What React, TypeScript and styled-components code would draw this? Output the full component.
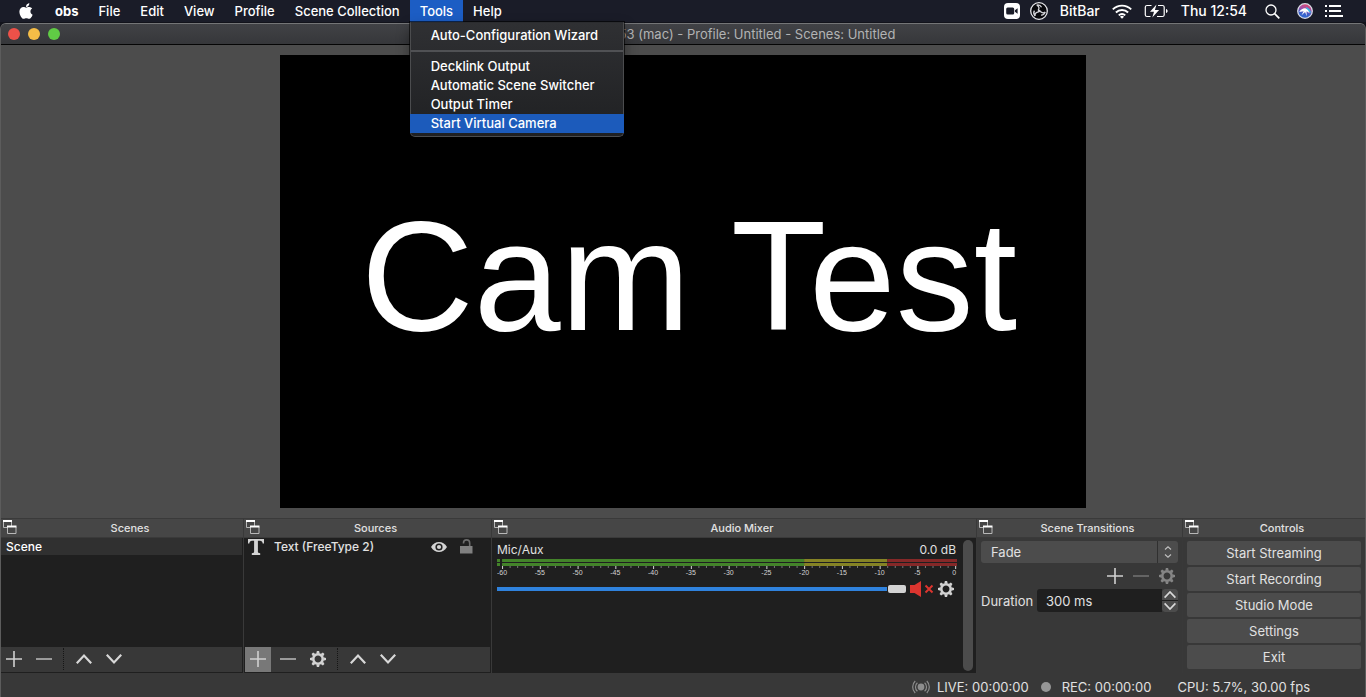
import React from "react";
import styled, { createGlobalStyle } from "styled-components";
import { FaApple } from "react-icons/fa";

const GlobalStyle = createGlobalStyle`
  *, *::before, *::after { box-sizing: border-box; }
  body { margin: 0; background: #1a1c28; }
  button, input, select { font: inherit; color: inherit; margin: 0; }
  svg { display: block; flex: none; }
`;

const Screen = styled.div`
  display: flex;
  flex-direction: column;
  min-height: 100vh;
  background: #12131b;
  font-family: Inter, "Liberation Sans", sans-serif;
  font-size: 13px;
  color: #e1e1e1;
`;

/* ---------- system menu bar ---------- */

const MenuBar = styled.header`
  display: flex;
  justify-content: space-between;
  height: 22px;
  padding: 0 23px 0 7px;
  background: #1a1c28;
  color: #fff;
  font-weight: 500;
  line-height: 22px;
  white-space: nowrap;
`;

const MenuList = styled.nav`
  display: flex;
`;

const MenuItem = styled.div`
  position: relative;
`;

const MenuButton = styled.button<{ $active?: boolean; $bold?: boolean }>`
  display: flex;
  align-items: center;
  height: 22px;
  padding: 0 10px;
  border: 0;
  background: ${(p) => (p.$active ? "#1c5dc4" : "transparent")};
  font-weight: ${(p) => (p.$bold ? 700 : 500)};
`;

const Dropdown = styled.div`
  position: absolute;
  top: 100%;
  left: 0;
  z-index: 2;
  display: flex;
  flex-direction: column;
  width: 214px;
  padding: 3px 0;
  border: 1px solid #4b4c4e;
  border-top-color: #2b2c2f;
  border-radius: 0 0 5px 5px;
  background: linear-gradient(#2f3033, #1f2022);
  box-shadow: 0 0 0 1px rgba(0, 0, 0, 0.6), 0 6px 14px rgba(0, 0, 0, 0.4);
`;

const DropdownItem = styled.button<{ $active?: boolean }>`
  height: 19px;
  margin: 0 -1px;
  padding: 0 21px 1px;
  border: 0;
  background: ${(p) => (p.$active ? "#1c5bbb" : "transparent")};
  line-height: 18px;
  text-align: left;
`;

const DropdownRule = styled.hr`
  width: 100%;
  height: 2px;
  margin: 5px 0;
  border: 0;
  background: #505154;
`;

const StatusItems = styled.div`
  display: flex;
  align-items: center;
  font-size: 14px;
`;

const StatusItem = styled.span<{ $gap: number }>`
  margin-right: ${(p) => p.$gap}px;
`;

/* ---------- application window ---------- */

const Window = styled.main`
  display: flex;
  flex: 1;
  flex-direction: column;
  margin-top: 1px;
  border-top: 1px solid #747577;
  border-left: 1px solid #5c5c5c;
  border-right: 1px solid #5c5c5c;
  border-radius: 6px 6px 0 0;
  background: #383838;
  overflow: hidden;
`;

const TitleBar = styled.div`
  display: flex;
  align-items: center;
  height: 21px;
  padding: 0 7px;
  border-bottom: 1px solid #050505;
  background: linear-gradient(#414246, #36373a);
`;

const Lights = styled.div`
  display: flex;
  flex: none;
  gap: 8px;
  width: 52px;
`;

const Light = styled.button<{ $color: string }>`
  width: 12px;
  height: 12px;
  padding: 0;
  border: 0;
  border-radius: 50%;
  background: ${(p) => p.$color};
`;

const WindowTitle = styled.h1`
  flex: 1;
  margin: 0;
  padding: 0 52px 0 148px;
  color: #b2b3b4;
  font-size: 13px;
  font-weight: 400;
  line-height: 20px;
  text-align: center;
  white-space: nowrap;
`;

const PreviewArea = styled.section`
  display: flex;
  flex: 1;
  justify-content: center;
  min-height: 0;
  padding: 10px 0;
  background: #4c4c4c;
`;

const Canvas = styled.div`
  display: flex;
  align-items: center;
  justify-content: center;
  height: calc(100vh - 244px);
  aspect-ratio: 16 / 9;
  padding: 0 0 12px 12px;
  background: #000;
  color: #fff;
  font-family: "Liberation Sans", Arial, sans-serif;
  font-size: 156px;
  line-height: 176px;
  white-space: nowrap;
`;

/* ---------- docks ---------- */

const Docks = styled.div`
  display: grid;
  grid-template-columns: 243fr 248fr 485fr 206fr 182fr;
  height: 155px;
`;

const Dock = styled.section`
  display: flex;
  flex-direction: column;
  min-width: 0;
  border-right: 1px solid #393939;
  &:last-child { border-right: 0; }
`;

const DockHeader = styled.header`
  display: flex;
  align-items: center;
  height: 20px;
  padding-left: 1px;
  border-top: 1px solid #3a3a3a;
  border-bottom: 1px solid #3a3a3a;
  background: #464646;
`;

const DockTitle = styled.h2`
  flex: 1;
  margin: 0;
  font-size: 11px;
  font-weight: 500;
  line-height: 18px;
  text-align: center;
`;

const ListBody = styled.div<{ $inset?: boolean }>`
  display: flex;
  flex: 1;
  flex-direction: column;
  padding: 0 1px 0 ${(p) => (p.$inset ? 1 : 0)}px;
  border-bottom: 1px solid #1f1f1f;
  background: #1f1f1f;
`;

const List = styled.ul`
  flex: 1;
  margin: 0;
  padding: 0;
  list-style: none;
`;

const ListRow = styled.li<{ $selected?: boolean }>`
  display: flex;
  align-items: center;
  height: 17px;
  padding: 0 5px 0 ${(p) => (p.$selected ? 5 : 3)}px;
  background: ${(p) => (p.$selected ? "#303030" : "transparent")};
  color: ${(p) => (p.$selected ? "#fff" : "#e1e1e1")};
  font-size: 12px;
  font-weight: 500;
`;

const SourceName = styled.span`
  flex: 1;
  padding-left: 10px;
`;

const IconButton = styled.button<{ $hot?: boolean; $w?: number; $h?: number }>`
  display: flex;
  align-items: center;
  justify-content: center;
  flex: none;
  width: ${(p) => p.$w ?? 26}px;
  height: ${(p) => p.$h ?? 25}px;
  padding: 0;
  border: 0;
  background: ${(p) => (p.$hot ? "#787878" : "transparent")};
`;

const Toolbar = styled.div`
  display: flex;
  gap: 4px;
  height: 25px;
  background: #383838;
  ${IconButton} { padding-bottom: 1px; }
`;

const ToolDivider = styled.span`
  width: 1px;
  height: 22px;
  margin: 1px 3px 0 2px;
  border-left: 1px dotted #161616;
`;

/* ---------- mixer ---------- */

const MixerBody = styled.div`
  display: flex;
  flex: 1;
  gap: 6px;
  padding: 2px 3px 2px 5px;
  background: #1f1f1f;
`;

const Channel = styled.div`
  flex: 1;
  min-width: 0;
  padding-top: 2px;
`;

const ChannelHead = styled.div`
  display: flex;
  justify-content: space-between;
  height: 17px;
  padding-right: 1px;
  font-size: 12px;
  line-height: 16px;
`;

const ChannelControls = styled.div`
  display: flex;
  align-items: center;
  gap: 4px;
  height: 20px;
  margin-top: 2px;
  padding-right: 3px;
`;

const Volume = styled.input`
  flex: 1;
  min-width: 0;
  height: 8px;
  appearance: none;
  background: linear-gradient(#2f82dd, #2f82dd) center / 100% 4px no-repeat;
  border-radius: 2px;
  &::-webkit-slider-thumb {
    appearance: none;
    width: 18px;
    height: 8px;
    border-radius: 2px;
    background: #d3d3d3;
    box-shadow: -1px 0 0 #1f1f1f;
  }
`;

const ScrollThumb = styled.div`
  width: 10px;
  border-radius: 5px;
  background: #4c4c4c;
`;

/* ---------- transitions and controls ---------- */

const FormBody = styled.div`
  display: flex;
  flex: 1;
  flex-direction: column;
  padding: 3px 4px;
  background: #383838;
`;

const ComboBox = styled.div`
  display: grid;
  grid-template-columns: 1fr 21px;
  height: 22px;
  border-radius: 3px;
  background: #4c4c4c;
  overflow: hidden;
`;

const Combo = styled.select`
  grid-area: 1 / 1 / 2 / 3;
  width: 100%;
  padding: 0 10px;
  border: 0;
  appearance: none;
  background: transparent;
`;

const ComboArrow = styled.span`
  grid-area: 1 / 2;
  display: flex;
  align-items: center;
  justify-content: center;
  border-left: 1px solid #303030;
  pointer-events: none;
`;

const TransitionTools = styled.div`
  display: flex;
  justify-content: flex-end;
  height: 26px;
  margin-right: -2px;
`;

const DurationRow = styled.div`
  display: flex;
  align-items: center;
  height: 23px;
`;

const DurationLabel = styled.label`
  width: 56px;
`;

const DurationInput = styled.input`
  flex: 1;
  min-width: 0;
  height: 23px;
  padding: 0 9px;
  border: 0;
  border-radius: 3px 0 0 3px;
  background: #1f1f1f;
`;

const Spinner = styled.div`
  display: flex;
  flex-direction: column;
  gap: 1px;
  width: 16px;
  border-radius: 3px;
  background: #1f1f1f;
  overflow: hidden;
`;

const SpinButton = styled.button`
  display: flex;
  align-items: center;
  justify-content: center;
  height: 11px;
  padding: 0;
  border: 0;
  background: #4c4c4c;
`;

const ControlStack = styled(FormBody)`
  gap: 2px;
`;

const ControlButton = styled.button`
  height: 24px;
  padding: 0;
  border: 0;
  border-radius: 2px;
  background: #4c4c4c;
  line-height: 24px;
`;

const StatusBar = styled.footer`
  display: flex;
  align-items: center;
  justify-content: flex-end;
  height: 24px;
  padding: 4px 55px 0 0;
  background: #383838;
  white-space: nowrap;
`;

const StatusText = styled.span<{ $left: number }>`
  margin-left: ${(p) => p.$left}px;
`;

const RecordDot = styled.span`
  width: 10px;
  height: 10px;
  margin-left: 12px;
  border-radius: 50%;
  background: #969696;
`;

/* ---------- icons ---------- */

const FloatIcon = () => (
  <svg width="15" height="16" viewBox="0 0 15 16" fill="none">
    <path d="M1.500 1v6.500h8V1" stroke="#b8b8b8" />
    <path d="M1 1h9" stroke="#fff" strokeWidth="2" />
    <path d="M5.500 7v6.500h8.500V7" fill="#464646" stroke="#b8b8b8" />
    <path d="M5 6.500h9.500" stroke="#fff" strokeWidth="2" />
  </svg>
);

const PlusIcon = () => (
  <svg width="16" height="16" viewBox="0 0 16 16" stroke="#d0d0d0" strokeWidth="1.6">
    <path d="M8 0v16M0 8h16" />
  </svg>
);

const MinusIcon = ({ color = "#b4b4b4" }: { color?: string }) => (
  <svg width="16" height="16" viewBox="0 0 16 16" stroke={color} strokeWidth="1.6">
    <path d="M0 8h16" />
  </svg>
);

const ChevronIcon = ({ down, size = 16 }: { down?: boolean; size?: number }) => (
  <svg width={size} height={size * 0.75} viewBox="0 0 16 12" fill="none" stroke="#d8d8d8" strokeWidth="2.2">
    <path d={down ? "M.8 1.8 8 9.4l7.2-7.6" : "M.8 10.2 8 2.6l7.2 7.6"} />
  </svg>
);

const GearIcon = ({ color = "#d3d3d3" }: { color?: string }) => (
  <svg width="16" height="16" viewBox="-8 -8 16 16">
    <circle r="4.7" fill="none" stroke={color} strokeWidth="2.5" />
    {[0, 45, 90, 135, 180, 225, 270, 315].map((a) => (
      <path key={a} d="M-1.7-5.4-1.1-8h2.2l.6 2.6z" fill={color} transform={`rotate(${a})`} />
    ))}
  </svg>
);

const TextSourceIcon = () => (
  <svg width="16" height="16" viewBox="0 0 16 16" fill="#d3d3d3">
    <path d="M0 0h16v4.400h-1.300C14.400 2.600 13.600 1.700 12 1.700H9.900v11.100c0 1 .7 1.300 2.300 1.400V16H3.800v-1.800c1.600-.1 2.300-.4 2.300-1.400V1.700H4C2.400 1.700 1.600 2.600 1.300 4.400H0z" />
  </svg>
);

const EyeIcon = () => (
  <svg width="16" height="12" viewBox="0 0 16 12">
    <path d="M0 6C2 2.500 4.800 1 8 1s6 1.500 8 5c-2 3.500-4.800 5-8 5S2 9.500 0 6z" fill="#d3d3d3" />
    <circle cx="8" cy="6" r="3.600" fill="#1f1f1f" />
    <circle cx="8" cy="6" r="2.100" fill="#d3d3d3" />
  </svg>
);

const LockIcon = () => (
  <svg width="13" height="15" viewBox="0 0 13 15">
    <path d="M3.500 4.600V4a3.100 3.100 0 0 1 6.200 0v4" fill="none" stroke="#6c6c6c" strokeWidth="1.600" />
    <path d="M0 7h12.500v7.500H0z" fill="#808080" />
  </svg>
);

const MutedIcon = () => (
  <svg width="24" height="16" viewBox="0 0 24 16">
    <path d="M0 4h4.500L11 0v16l-6.500-4H0z" fill="#dc352f" />
    <path d="m15.500 4.500 7 7m0-7-7 7" stroke="#dc352f" strokeWidth="1.900" />
  </svg>
);

const ComboIcon = () => (
  <svg width="8" height="12" viewBox="0 0 8 12" fill="none" stroke="#c0c0c0" strokeWidth="1.100">
    <path d="M1 3.500 4 .8l3 2.700M1 8.500l3 2.700 3-2.700" />
  </svg>
);

const BroadcastIcon = () => (
  <svg width="18" height="14" viewBox="-9 -7 18 14" fill="none" stroke="#8d8d8d" strokeWidth="1.200">
    <circle r="3.400" fill="#8d8d8d" stroke="none" />
    <path d="M-3.600-4.200a5.500 5.500 0 0 0 0 8.400M3.600-4.200a5.500 5.500 0 0 1 0 8.400M-5.800-6a8.400 8.400 0 0 0 0 12M5.800-6a8.400 8.400 0 0 1 0 12" />
  </svg>
);

const CameraIcon = () => (
  <svg width="16" height="16" viewBox="0 0 16 16">
    <rect width="16" height="16" rx="4" fill="#fff" />
    <rect x="2.200" y="4.500" width="8" height="7" rx="1.500" fill="#1a1c28" />
    <path d="m10.900 7.200 2.700-2v5.600l-2.700-2z" fill="#1a1c28" />
  </svg>
);

const ObsIcon = () => (
  <svg width="18" height="18" viewBox="-9 -9 18 18" fill="none">
    <circle r="8.300" fill="#07070b" stroke="#e6e6ea" strokeWidth="1.300" />
    {[0, 120, 240].map((a) => (
      <path
        key={a}
        d="M-.3-1.200C1.800-1.900 2.600-4.300.9-6.300M.9-6.300C3-5.600 4.200-4 4.100-2"
        stroke="#d4d4da"
        strokeWidth="1.300"
        transform={`rotate(${a - 30})`}
      />
    ))}
    <circle r="1.300" fill="#d4d4da" />
  </svg>
);

const WifiIcon = () => (
  <svg width="20" height="15" viewBox="0 0 20 15" fill="none" stroke="#fff" strokeWidth="1.900">
    <path d="M.8 5.400a13 13 0 0 1 18.400 0M3.900 8.500a8.600 8.600 0 0 1 12.200 0M6.800 11.300a4.500 4.500 0 0 1 6.400 0" />
    <path d="m10 14.800-2-2.100a2.900 2.900 0 0 1 4 0z" fill="#fff" stroke="none" />
  </svg>
);

const BatteryIcon = () => (
  <svg width="24" height="14" viewBox="0 0 24 14" fill="none" stroke="#fff">
    <path d="M7.500 1.500H3A1.700 1.700 0 0 0 1.300 3v8A1.700 1.700 0 0 0 3 12.500h3.500M14 1.500h4.500A1.700 1.700 0 0 1 20.200 3v8a1.700 1.700 0 0 1-1.700 1.500H13" strokeWidth="1.200" />
    <path d="m12.500.5-6.500 7.300h4l-1.700 5.700 6.800-7.600h-4.200z" fill="#fff" stroke="none" />
    <path d="M22 5v4c1-.4 1.600-1.100 1.600-2S23 5.400 22 5z" fill="#fff" stroke="none" />
  </svg>
);

const SearchIcon = () => (
  <svg width="15" height="15" viewBox="0 0 15 15" fill="none" stroke="#fff">
    <circle cx="6" cy="6" r="5" strokeWidth="1.300" />
    <path d="m9.600 9.600 4.700 4.700" strokeWidth="1.700" />
  </svg>
);

const SiriIcon = () => (
  <svg width="16" height="16" viewBox="0 0 16 16">
    <defs>
      <linearGradient id="siri" x1="0.600" y1="0" x2="0.300" y2="1">
        <stop offset="0" stopColor="#e0456c" />
        <stop offset="0.350" stopColor="#a24fa6" />
        <stop offset="0.650" stopColor="#3c5fc8" />
        <stop offset="1" stopColor="#2f6fd8" />
      </linearGradient>
    </defs>
    <circle cx="8" cy="8" r="7.300" fill="url(#siri)" stroke="#d9dbe6" strokeWidth="1.300" />
    <path d="M9 4c3 1 4.500 3 5.300 6L9.800 7.800z" fill="#35b6e6" />
    <path d="M2.200 9C4 6 6.800 4.800 8.800 5.400c1.700.6 3 2.400 3.900 4.900L9.500 8.300l.2 4.900-1.600-4.300-3.600 3.400 2.100-4z" fill="#fff" />
  </svg>
);

const ListIcon = () => (
  <svg width="18" height="12" viewBox="0 0 18 12" fill="#fff">
    <path d="M0 0h2v2H0zM4 0h12v2H4zM0 5h2v2H0zM4 5h12v2H4zM0 10h2v2H0zM4 10h14v2H4z" />
  </svg>
);

/* ---------- level meter ---------- */

const METER_LEFT = 1.1;
const SCALE = 98.5;
const at = (db: number) => METER_LEFT + ((db + 60) / 60) * SCALE;

const MeterSvg = styled.svg`
  width: 100%;
  height: 18px;
  fill: #d3d3d3;
  font-family: "Liberation Sans", sans-serif;
  font-size: 7px;
`;

const zones = [
  { from: at(-60), to: at(-20), color: "#43832a" },
  { from: at(-20), to: at(-9), color: "#858325" },
  { from: at(-9), to: 100, color: "#852828" },
];

const Meter = () => (
  <MeterSvg role="img" aria-label="Mic/Aux level">
    {[0, 4].map((y) => (
      <g key={y}>
        <rect x="0" y={y} width="3" height="3" fill="#43832a" />
        {zones.map((z) => (
          <rect key={z.color} x={`${z.from}%`} y={y} width={`${z.to - z.from}%`} height="3" fill={z.color} />
        ))}
      </g>
    ))}
    {Array.from({ length: 61 }, (_, i) => i - 60).map((db) => (
      <rect
        key={db}
        x={`${at(db)}%`}
        y="7"
        width="1"
        height={db % 5 === 0 ? 3 : 2}
        fill={db % 5 === 0 ? "#d3d3d3" : "#777"}
      />
    ))}
    {Array.from({ length: 13 }, (_, i) => i * 5 - 60).map((db) => (
      <text key={db} x={`${at(db)}%`} y="16" textAnchor={db === 0 ? "end" : "middle"} dx={db === 0 ? 1 : 0}>
        {db}
      </text>
    ))}
  </MeterSvg>
);

/* ---------- page ---------- */

const menusBefore = ["File", "Edit", "View", "Profile", "Scene Collection"];
const controls = ["Start Streaming", "Start Recording", "Studio Mode", "Settings", "Exit"];

const DockTop = ({ title }: { title: string }) => (
  <DockHeader>
    <FloatIcon />
    <DockTitle>{title}</DockTitle>
  </DockHeader>
);

export default function App() {
  return (
    <Screen>
      <GlobalStyle />
      <MenuBar>
        <MenuList>
          <MenuButton aria-label="Apple">
            <FaApple size={18} />
          </MenuButton>
          <MenuButton $bold>obs</MenuButton>
          {menusBefore.map((m) => (
            <MenuButton key={m}>{m}</MenuButton>
          ))}
          <MenuItem>
            <MenuButton $active>Tools</MenuButton>
            <Dropdown>
              <DropdownItem>Auto-Configuration Wizard</DropdownItem>
              <DropdownRule />
              <DropdownItem>Decklink Output</DropdownItem>
              <DropdownItem>Automatic Scene Switcher</DropdownItem>
              <DropdownItem>Output Timer</DropdownItem>
              <DropdownItem $active>Start Virtual Camera</DropdownItem>
            </Dropdown>
          </MenuItem>
          <MenuButton>Help</MenuButton>
        </MenuList>
        <StatusItems>
          <StatusItem $gap={10}><CameraIcon /></StatusItem>
          <StatusItem $gap={12}><ObsIcon /></StatusItem>
          <StatusItem $gap={12}>BitBar</StatusItem>
          <StatusItem $gap={12}><WifiIcon /></StatusItem>
          <StatusItem $gap={13}><BatteryIcon /></StatusItem>
          <StatusItem $gap={18}>Thu 12:54</StatusItem>
          <StatusItem $gap={17}><SearchIcon /></StatusItem>
          <StatusItem $gap={12}><SiriIcon /></StatusItem>
          <ListIcon />
        </StatusItems>
      </MenuBar>

      <Window>
        <TitleBar>
          <Lights>
            <Light $color="#ed5149" aria-label="Close" />
            <Light $color="#f5bd47" aria-label="Minimize" />
            <Light $color="#60cb45" aria-label="Zoom" />
          </Lights>
          <WindowTitle>53 (mac) - Profile: Untitled - Scenes: Untitled</WindowTitle>
        </TitleBar>

        <PreviewArea>
          <Canvas>Cam Test</Canvas>
        </PreviewArea>

        <Docks>
          <Dock>
            <DockTop title="Scenes" />
            <ListBody>
              <List>
                <ListRow $selected>Scene</ListRow>
              </List>
              <Toolbar>
                <IconButton aria-label="Add scene"><PlusIcon /></IconButton>
                <IconButton aria-label="Remove scene"><MinusIcon /></IconButton>
                <ToolDivider />
                <IconButton aria-label="Move scene up"><ChevronIcon /></IconButton>
                <IconButton aria-label="Move scene down"><ChevronIcon down /></IconButton>
              </Toolbar>
            </ListBody>
          </Dock>

          <Dock>
            <DockTop title="Sources" />
            <ListBody $inset>
              <List>
                <ListRow>
                  <TextSourceIcon />
                  <SourceName>Text (FreeType 2)</SourceName>
                  <IconButton $w={16} $h={16} aria-label="Hide source"><EyeIcon /></IconButton>
                  <IconButton $w={38} $h={16} aria-label="Lock source"><LockIcon /></IconButton>
                </ListRow>
              </List>
              <Toolbar>
                <IconButton $hot aria-label="Add source"><PlusIcon /></IconButton>
                <IconButton aria-label="Remove source"><MinusIcon /></IconButton>
                <IconButton aria-label="Source properties"><GearIcon /></IconButton>
                <ToolDivider />
                <IconButton aria-label="Move source up"><ChevronIcon /></IconButton>
                <IconButton aria-label="Move source down"><ChevronIcon down /></IconButton>
              </Toolbar>
            </ListBody>
          </Dock>

          <Dock>
            <DockTop title="Audio Mixer" />
            <MixerBody>
              <Channel>
                <ChannelHead>
                  <label htmlFor="mic">Mic/Aux</label>
                  <span>0.0 dB</span>
                </ChannelHead>
                <Meter />
                <ChannelControls>
                  <Volume id="mic" type="range" min="0" max="100" defaultValue="100" />
                  <IconButton $w={24} $h={18} aria-label="Unmute"><MutedIcon /></IconButton>
                  <IconButton $w={16} $h={18} aria-label="Mic/Aux settings"><GearIcon /></IconButton>
                </ChannelControls>
              </Channel>
              <ScrollThumb />
            </MixerBody>
          </Dock>

          <Dock>
            <DockTop title="Scene Transitions" />
            <FormBody>
              <ComboBox>
                <Combo aria-label="Transition" defaultValue="Fade">
                  <option>Fade</option>
                  <option>Cut</option>
                </Combo>
                <ComboArrow><ComboIcon /></ComboArrow>
              </ComboBox>
              <TransitionTools>
                <IconButton aria-label="Add transition"><PlusIcon /></IconButton>
                <IconButton aria-label="Remove transition"><MinusIcon color="#707070" /></IconButton>
                <IconButton aria-label="Transition properties"><GearIcon color="#858585" /></IconButton>
              </TransitionTools>
              <DurationRow>
                <DurationLabel htmlFor="duration">Duration</DurationLabel>
                <DurationInput id="duration" type="text" defaultValue="300 ms" />
                <Spinner>
                  <SpinButton aria-label="Increase"><ChevronIcon size={12} /></SpinButton>
                  <SpinButton aria-label="Decrease"><ChevronIcon down size={12} /></SpinButton>
                </Spinner>
              </DurationRow>
            </FormBody>
          </Dock>

          <Dock>
            <DockTop title="Controls" />
            <ControlStack>
              {controls.map((c) => (
                <ControlButton key={c}>{c}</ControlButton>
              ))}
            </ControlStack>
          </Dock>
        </Docks>

        <StatusBar>
          <BroadcastIcon />
          <StatusText $left={7}>LIVE: 00:00:00</StatusText>
          <RecordDot />
          <StatusText $left={11}>REC: 00:00:00</StatusText>
          <StatusText $left={26}>CPU: 5.7%, 30.00 fps</StatusText>
        </StatusBar>
      </Window>
    </Screen>
  );
}
